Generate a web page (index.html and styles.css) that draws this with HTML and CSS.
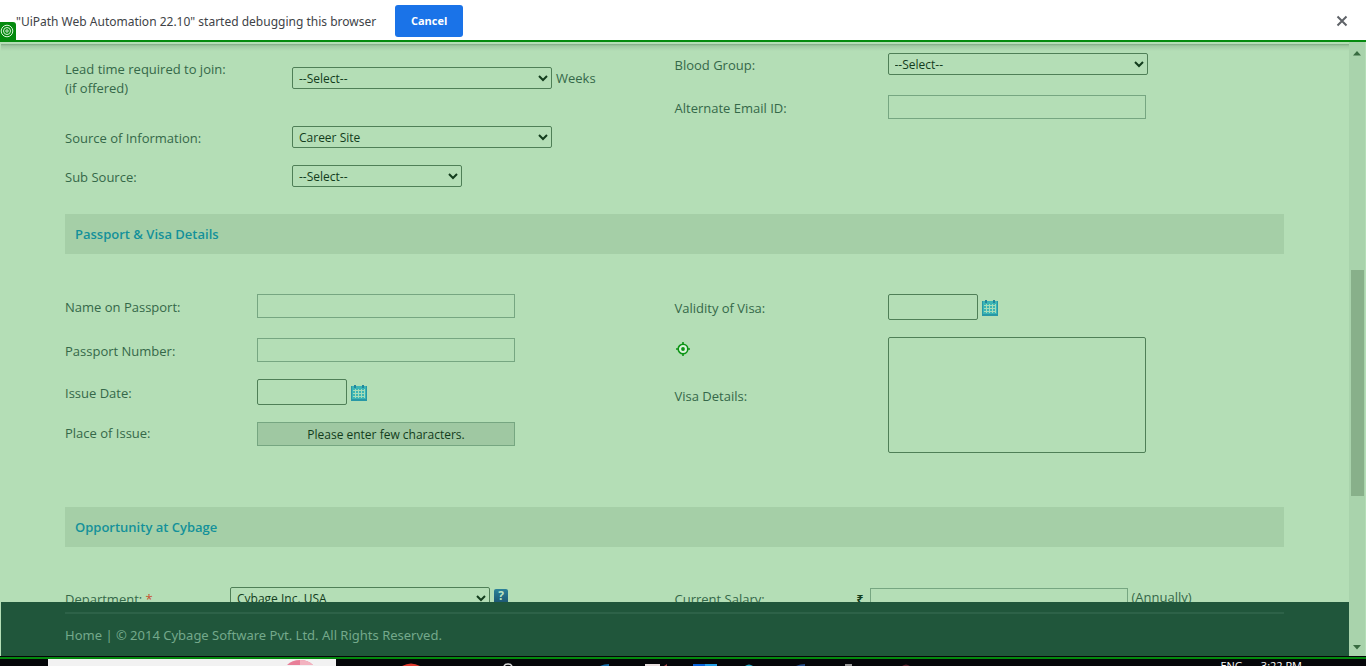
FILE: index.html
```html
<!DOCTYPE html>
<html lang="en">
<head>
<meta charset="utf-8">
<title>Candidate Profile</title>
<link rel="stylesheet" href="styles.css">
</head>
<body>
<svg class="symbols" aria-hidden="true">
  <symbol id="calendar" viewBox="0 0 16 16">
    <rect y="1" width="16" height="15" fill="#2898a6"/>
    <rect x="1" y="1" width="14" height="13" fill="#3cb5b5"/>
    <path d="M3 0h2v3H3zM11 0h2v3h-2z" fill="#23869c"/>
    <path d="M2 5.500h12M2 8.500h12M2 11.500h12M4.500 4v9M7.500 4v9M10.500 4v9M13.500 4v9" stroke="#a5dcb8" fill="none"/>
  </symbol>
</svg>

<header class="infobar">
  <span class="infobar-text">"UiPath Web Automation 22.10" started debugging this browser</span>
  <button class="cancel" type="button">Cancel</button>
  <button class="close" type="button" aria-label="Close">
    <svg width="12" height="12" viewBox="0 0 12 12"><path d="M1.500 1.500l9 9M10.500 1.500l-9 9" stroke="#5f6368" stroke-width="2" fill="none"/></svg>
  </button>
  <span class="badge">
    <svg width="14" height="14" viewBox="0 0 14 14" fill="none" stroke="#d9f2da"><circle cx="7" cy="7" r="5.800"/><circle cx="7" cy="7" r="3.500"/><circle cx="7" cy="7" r="1.200"/></svg>
  </span>
</header>

<div class="viewport">
  <div class="page">
    <main class="form">
      <section class="columns general">
        <div>
          <div class="row row-tall"><label class="label-xl" for="lead">Lead time required to join:<br>(if offered)</label><select id="lead" class="wide"><option>--Select--</option></select><span class="suffix">Weeks</span></div>
          <div class="row row-roomy"><label class="label-xl" for="source">Source of Information:</label><select id="source" class="wide"><option>Career Site</option></select></div>
          <div class="row row-tight"><label class="label-xl" for="sub">Sub Source:</label><select id="sub" class="medium"><option>--Select--</option></select></div>
        </div>
        <div>
          <div class="row"><label class="label-l" for="blood">Blood Group:</label><select id="blood" class="wide"><option>--Select--</option></select></div>
          <div class="row row-medium"><label class="label-l" for="email">Alternate Email ID:</label><input id="email" class="field" type="email"></div>
        </div>
      </section>

      <h2>Passport &amp; Visa Details</h2>
      <section class="columns passport">
        <div>
          <div class="row"><label class="label-m" for="pname">Name on Passport:</label><input id="pname" class="field" type="text"></div>
          <div class="row"><label class="label-m" for="pnum">Passport Number:</label><input id="pnum" class="field" type="text"></div>
          <div class="row row-short"><label class="label-m" for="issue">Issue Date:</label><input id="issue" class="date" type="text"><svg class="calendar"><use href="#calendar"/></svg></div>
          <div class="row"><label class="label-m label-raised" for="place">Place of Issue:</label><input id="place" class="field hint" type="text" value="Please enter few characters."></div>
        </div>
        <div>
          <div class="row row-roomy"><label class="label-l" for="valid">Validity of Visa:</label><input id="valid" class="date" type="text"><svg class="calendar"><use href="#calendar"/></svg></div>
          <div class="row row-area">
            <label class="label-l" for="visa">Visa Details:</label><textarea id="visa"></textarea>
            <svg class="target" viewBox="0 0 14 14"><circle cx="7" cy="7" r="4.800" fill="#dcf3dd" stroke="#0c9415" stroke-width="1.600"/><circle cx="7" cy="7" r="1.900" fill="#0c9415"/><path d="M7 0v3M7 11v3M0 7h3M11 7h3" stroke="#0c9415" stroke-width="1.600"/></svg>
          </div>
        </div>
      </section>

      <h2>Opportunity at Cybage</h2>
      <section class="columns opportunity">
        <div class="row row-medium"><label class="label-s" for="dept">Department: <span class="required">*</span></label><select id="dept" class="wide"><option>Cybage Inc. USA</option></select><button class="help" type="button">?</button></div>
        <div class="row row-roomy"><label class="label-salary label-raised" for="salary">Current Salary:</label><span class="rupee">₹</span><input id="salary" class="field" type="text"><span class="suffix suffix-raised">(Annually)</span></div>
      </section>
    </main>
    <footer><div class="footer-text"><a href="#">Home</a> | © 2014 Cybage Software Pvt. Ltd. All Rights Reserved.</div></footer>
  </div>
  <div class="scrollbar">
    <svg width="8" height="5" viewBox="0 0 8 5"><path d="M4 0l4 4.500H0z" fill="#386b40"/></svg>
    <div class="track"><div class="thumb"></div></div>
    <svg width="8" height="5" viewBox="0 0 8 5"><path d="M4 4.500L0 0h8z" fill="#386b40"/></svg>
  </div>
</div>

<div class="taskbar">
  <div class="search"><svg width="26" height="6" viewBox="0 0 26 6"><path d="M0 6Q5 1 13 1T26 6z" fill="#e87f98"/><path d="M13 1q8 0 13 5H13z" fill="#f3b3c0"/></svg></div>
  <svg class="apps" width="560" height="7" viewBox="0 0 560 7">
    <path d="M41 7q9-5 18 0z" fill="#e23b2e"/>
    <path d="M143 7q1-2 4-2t4 2" fill="none" stroke="#ddd" stroke-width="1.500"/>
    <path d="M239 7q4-2 9-2v2z" fill="#1670ab"/>
    <path d="M284 5h15v2h-15z" fill="#e8dfdf"/><path d="M303 7l3-2v2z" fill="#a54848"/>
    <path d="M332 5h12v2h-12z" fill="#0762d8"/><path d="M344 5h12v2h-12z" fill="#249fe8"/>
    <path d="M384 7q4-3 8 0z" fill="#28a9c2"/>
    <path d="M435 7q4-2 9-2v2z" fill="#254c87"/>
    <path d="M484 5h7v2h-7z" fill="#999"/>
    <path d="M541 7q4-3 8 0z" fill="#5d2630"/>
  </svg>
  <div class="tray"><span>ENG</span><span>3:22 PM</span></div>
</div>
</body>
</html>
```
FILE: styles.css
```css
* { box-sizing: border-box; }

body {
  margin: 0;
  height: 100vh;
  display: flex;
  flex-direction: column;
  overflow: hidden;
  background: #b4deb6;
  color: #356849;
  font: 13px/19px "Open Sans", "Noto Sans", sans-serif;
}

.symbols { position: absolute; width: 0; height: 0; }

input, select, textarea, button { font: inherit; margin: 0; }

.infobar {
  position: relative;
  flex: none;
  display: flex;
  align-items: center;
  height: 42px;
  padding: 2px 16px 0;
  border-bottom: 2px solid #048a0e;
  background: #fff;
  color: #404347;
}
.infobar-text { font-family: "Noto Sans", sans-serif; font-size: 12px; }
.cancel {
  width: 68px;
  height: 32px;
  margin-left: 19px;
  padding: 0 0 2px;
  border: 0;
  border-radius: 3px;
  background: #1a73e8;
  color: #fff;
  font-size: 11px;
  font-weight: 700;
}
.close {
  display: flex;
  margin-left: auto;
  padding: 2px;
  border: 0;
  background: none;
}
.badge {
  position: absolute;
  left: 0;
  bottom: -2px;
  display: flex;
  width: 16px;
  height: 20px;
  padding: 2px 0 0;
  border-radius: 0 3px 0 0;
  background: #048a0e;
}

.viewport {
  flex: 1;
  min-height: 0;
  display: flex;
  padding: 0 1px;
}
.page {
  flex: 1;
  min-width: 0;
  display: flex;
  flex-direction: column;
}
.form {
  flex: 1;
  min-height: 0;
  overflow: hidden;
  padding: 0 65px 0 64px;
  background: linear-gradient(#b4deb6 0, #b4deb6 2px, #7fa783 2px, #a1c9a4 4px, #b4deb6 9px);
}

.columns { display: grid; grid-template-columns: 1fr 1fr; align-items: start; }
.general { padding-bottom: 22px; }
.passport { padding: 30px 0 47px; }
.opportunity { padding-top: 30px; }

h2 {
  margin: 0;
  padding: 0 10px;
  background: #a5cfa7;
  color: #14919a;
  font-size: 13px;
  font-weight: 600;
  line-height: 40px;
}

.row { position: relative; display: flex; align-items: center; height: 44px; }
.row-tall { height: 72px; }
.row-tight { height: 32px; }
.row-short { height: 40px; }
.row-medium { height: 42px; }
.row-roomy { height: 46px; }
.row-area { height: 130px; }

label { flex: none; padding-top: 2px; }
.label-raised { padding: 0 0 2px; }
.label-xl { width: 227px; }
.label-l { width: 213px; }
.label-m { width: 192px; }
.label-s { width: 165px; }
.label-salary { width: 182px; }
.required { color: #c85030; }
.suffix { margin-left: 4px; }
.suffix-raised { padding-bottom: 5px; }
.rupee { width: 13px; padding-bottom: 2px; color: #123c1c; font-size: 12px; font-weight: 700; }

select {
  height: 22px;
  padding: 0 2px;
  border: 1px solid #4f7f57;
  border-radius: 2px;
  background: transparent;
  color: #123c1c;
  font-size: 12px;
}
.wide { width: 260px; }
.medium { width: 170px; }

input, textarea {
  border: 1px solid #76a681;
  background: transparent;
  color: #123c1c;
}
.field { width: 258px; height: 24px; }
.date { width: 90px; height: 26px; border-color: #4f7f57; border-radius: 2px; }
textarea { width: 258px; height: 116px; border-color: #4f7f57; border-radius: 2px; resize: none; }
.hint { background: #9fc8a2; font-size: 12px; text-align: center; }

.calendar { width: 16px; height: 16px; margin: 2px 0 0 4px; }
.target { position: absolute; left: 1px; top: 12px; width: 14px; height: 14px; }
.help {
  width: 14px;
  height: 15px;
  margin: 0 0 4px 4px;
  padding: 0;
  border: 0;
  border-radius: 2px;
  background: linear-gradient(#2c8299, #1b536f);
  color: #bce4c2;
  font-size: 12px;
  font-weight: 700;
  line-height: 14px;
}

footer {
  flex: none;
  padding: 10px 65px 11px 64px;
  background: #20563b;
  color: #74a98b;
  font-family: "Noto Sans", sans-serif;
}
.footer-text { padding-top: 12px; border-top: 2px solid #2d6248; }
footer a { color: inherit; text-decoration: none; }

.scrollbar {
  flex: none;
  display: flex;
  flex-direction: column;
  align-items: center;
  width: 16px;
  padding: 9px 0 6px;
  background: #a9d3ac;
}
.track { flex: 1; width: 13px; padding-top: 214px; }
.thumb { height: 226px; background: #88b08a; }

.taskbar {
  flex: none;
  display: flex;
  height: 10px;
  padding: 0 64px 0 48px;
  overflow: hidden;
  background: linear-gradient(transparent 1px, #048a0e 1px, #048a0e 3px, transparent 3px), #050609;
  color: #fff;
  font-size: 11px;
  line-height: 15px;
}
.search {
  width: 288px;
  height: 7px;
  margin-top: 3px;
  padding-left: 239px;
  background: #f2f2f2;
}
.search svg { display: block; }
.apps { flex: none; margin: 3px 0 0 25px; }
.tray { display: flex; gap: 18px; margin: 2px 0 0 auto; }
```
